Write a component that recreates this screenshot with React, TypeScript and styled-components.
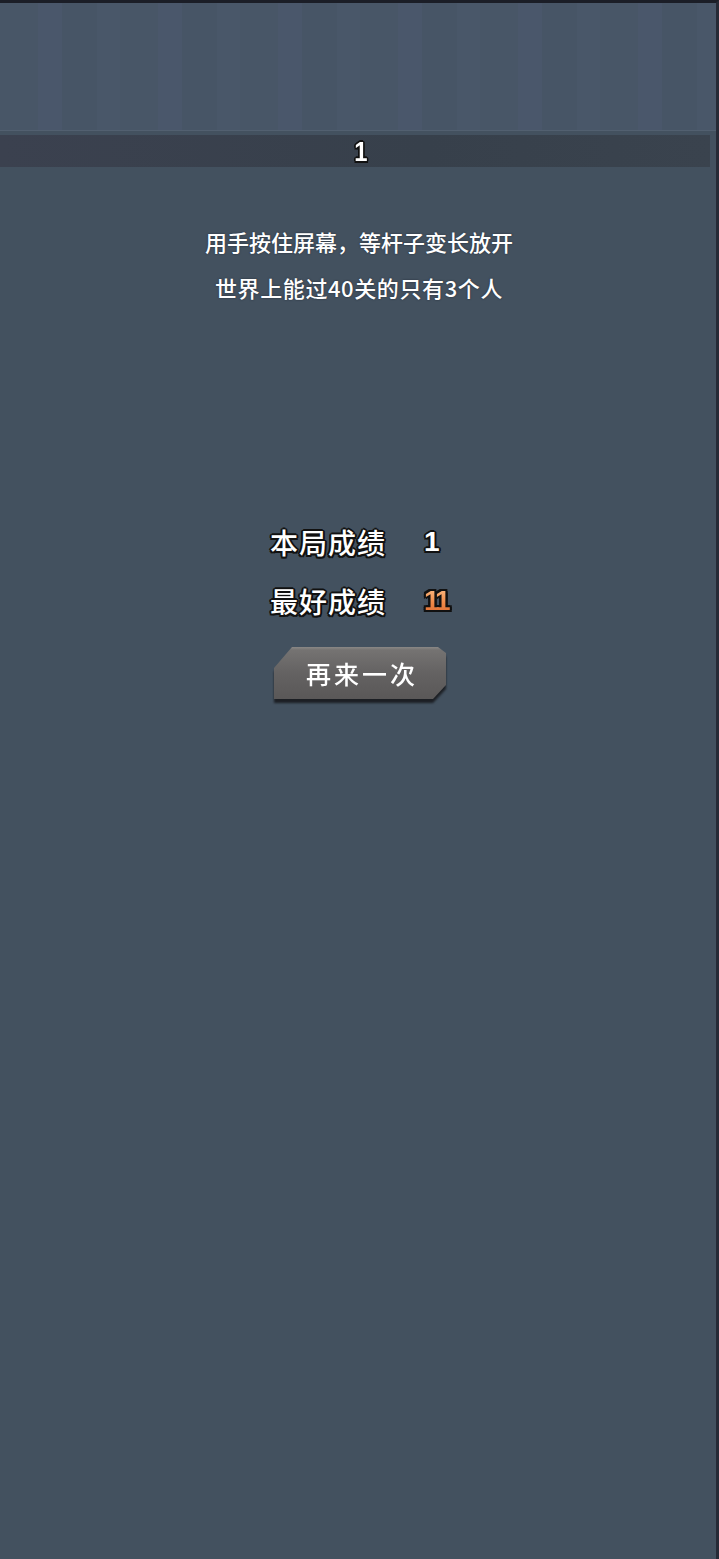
import React from "react";
import styled, { createGlobalStyle } from "styled-components";

const GlobalStyle = createGlobalStyle`
    html, body {
        margin: 0;
        padding: 0;
        background: #1b1e27;
    }
    * {
        box-sizing: border-box;
    }
`;

const outline = `
    -1.5px -1.5px 0 #111, 1.5px -1.5px 0 #111, -1.5px 1.5px 0 #111, 1.5px 1.5px 0 #111,
    0 -2px 0 #111, 0 2px 0 #111, -2px 0 0 #111, 2px 0 0 #111
`;

const Page = styled.div`
    width: 719px;
    min-height: 1559px;
    background: #43515f;
    border-top: 3px solid #1b1e27;
    border-right: 3px solid #262a36;
    display: flex;
    flex-direction: column;
    font-family: "Noto Sans CJK SC", "Noto Sans", sans-serif;
    color: #fff;
`;

const Sky = styled.div`
    height: 128px;
    border-bottom: 1px solid #526070;
    background: repeating-linear-gradient(
        90deg,
        #485667 0px,
        #485667 38px,
        #4a576b 38px,
        #4a576b 62px,
        #475566 62px,
        #475566 97px,
        #495769 97px,
        #495769 120px
    );
`;

const LevelBar = styled.div`
    margin-top: 4px;
    margin-right: 6px;
    height: 32px;
    background: linear-gradient(90deg, #3b414f, #37404b 60%, #3a434e);
    display: flex;
    align-items: center;
    justify-content: center;
`;

const LevelNumber = styled.span`
    font-family: "Liberation Sans", sans-serif;
    font-weight: bold;
    font-size: 28px;
    line-height: 1;
    margin-left: 12px;
    margin-top: 2px;
    transform: scaleX(0.85);
    text-shadow: ${outline};
`;

const Hint = styled.div`
    margin-top: 51px;
    text-align: center;
    font-size: 22px;
    font-weight: 500;
    line-height: 46px;
    padding-left: 2px;
    text-shadow: 0 0 2px #222a35;
`;

const HintLine = styled.div<{ $spacing?: number }>`
    letter-spacing: ${(p) => p.$spacing ?? 0}px;
`;

const Scores = styled.div`
    margin-top: 202px;
    display: flex;
    flex-direction: column;
    align-items: center;
`;

const ScoreRow = styled.div`
    display: flex;
    align-items: center;
    gap: 38px;
    height: 59px;
    padding-left: 4px;
`;

const ScoreLabel = styled.span`
    font-size: 28px;
    font-weight: 500;
    letter-spacing: 1px;
    text-shadow: ${outline};
`;

const ScoreValue = styled.span<{ $best?: boolean }>`
    width: 26px;
    font-family: "Liberation Sans", sans-serif;
    font-weight: bold;
    font-size: 28px;
    letter-spacing: -3px;
    text-shadow: ${outline};
    color: ${(p) => (p.$best ? "#ec8a4c" : "#ffffff")};
    ${(p) =>
        p.$best &&
        `
        background: linear-gradient(180deg, #ffc48e, #f08a48 55%, #d8662e);
        -webkit-background-clip: text;
        background-clip: text;
        -webkit-text-fill-color: transparent;
        text-shadow: none;
        filter: drop-shadow(2px 0 0 #111) drop-shadow(-2px 0 0 #111) drop-shadow(0 2px 0 #111) drop-shadow(0 -1.5px 0 #111);
    `}
`;

const ButtonShadow = styled.div`
    margin-top: 17px;
    align-self: center;
    margin-left: 4px;
    filter: drop-shadow(0 4px 1px #1c1f24);
`;

const RetryButton = styled.button`
    width: 172px;
    height: 52px;
    border: none;
    padding: 0;
    cursor: pointer;
    display: flex;
    align-items: center;
    justify-content: center;
    background: linear-gradient(180deg, #8a8886 0px, #757372 3px, #646262 50%, #5a5858 100%);
    clip-path: polygon(18px 0, calc(100% - 8px) 0, 100% 6px, 100% calc(100% - 14px), calc(100% - 13px) 100%, 0 100%, 0 21px);
    font-family: "Noto Sans CJK SC", "Noto Sans", sans-serif;
    font-size: 25px;
    font-weight: 500;
    letter-spacing: 3px;
    color: #fff;
    padding-left: 4px;
`;

const App = () => {
    return (
        <Page>
            <GlobalStyle />
            <Sky />
            <LevelBar>
                <LevelNumber>1</LevelNumber>
            </LevelBar>
            <Hint>
                <HintLine>用手按住屏幕，等杆子变长放开</HintLine>
                <HintLine $spacing={0.6}>世界上能过40关的只有3个人</HintLine>
            </Hint>
            <Scores>
                <ScoreRow>
                    <ScoreLabel>本局成绩</ScoreLabel>
                    <ScoreValue>1</ScoreValue>
                </ScoreRow>
                <ScoreRow>
                    <ScoreLabel>最好成绩</ScoreLabel>
                    <ScoreValue $best>11</ScoreValue>
                </ScoreRow>
            </Scores>
            <ButtonShadow>
                <RetryButton>再来一次</RetryButton>
            </ButtonShadow>
        </Page>
    );
};

export default App;
